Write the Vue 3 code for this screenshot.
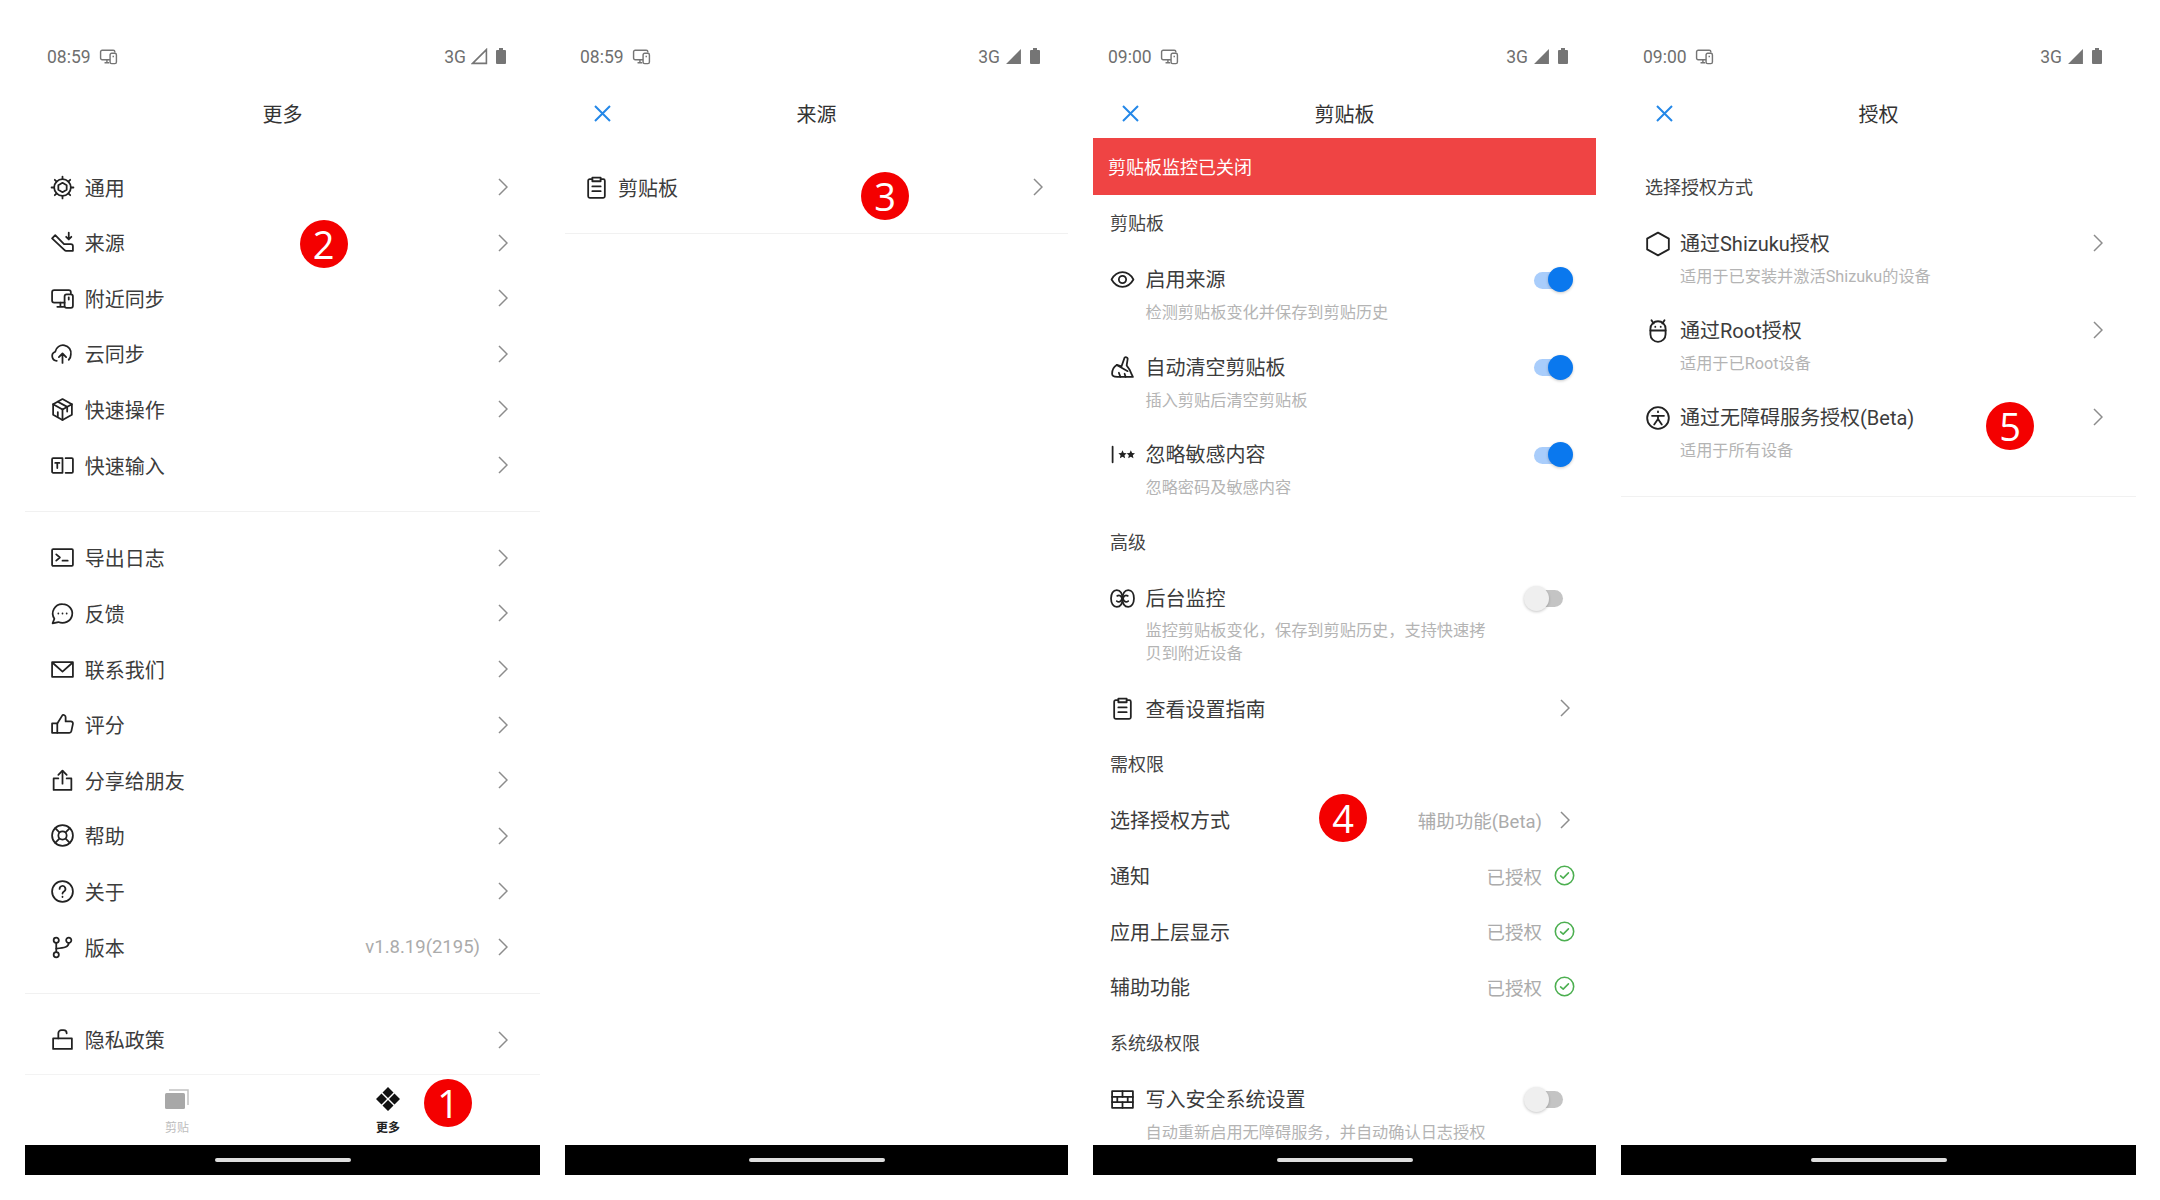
<script setup>
// circle helper so every icon can stay a plain list of path strings
const c = (x, y, r) => `M${x - r} ${y}a${r} ${r} 0 1 0 ${2 * r} 0a${r} ${r} 0 1 0 ${-2 * r} 0z`

const device = [
  'M14 16H4a2 2 0 0 1-2-2V6a2 2 0 0 1 2-2h14a2 2 0 0 1 2 2v1',
  'M7 20h6M10 16v4',
  'M16 8h4a2 2 0 0 1 2 2v9a2 2 0 0 1-2 2h-4a2 2 0 0 1-2-2v-9a2 2 0 0 1 2-2z',
  'M18 11v2',
]
const clipboard = [
  'M8 4H5.5A1.5 1.5 0 0 0 4 5.5v15A1.5 1.5 0 0 0 5.5 22h13a1.5 1.5 0 0 0 1.5-1.5v-15A1.5 1.5 0 0 0 18.5 4H16',
  'M8 2.5h8V6H8z',
  'M8 11h8M8 15.5h8',
]
const icons = {
  device,
  clipboard,
  gear: [c(12, 12, 8), 'M12 7.500l4 2.250v4.500l-4 2.250-4-2.250v-4.500z', 'M12 1.500V4M12 20v2.500M1.500 12H4M20 12h2.500M4.600 4.600l1.800 1.800M17.600 17.600l1.800 1.800M4.600 19.400l1.800-1.800M17.600 6.400l1.800-1.800'],
  source: ['M2 8l3-3 8.500 8.500H20a2 2 0 0 1 2 2V20h-6.500a2 2 0 0 1-1.500-.6z', 'M18 2.500V9M15.500 6.500L18 9l2.500-2.500'],
  cloud: ['M6.500 19A4.500 4.500 0 0 1 5 10.300 7.500 7.500 0 0 1 20 13c0 2.200-.8 3.800-2 5', 'M12 21v-9M8.500 15.500L12 12l3.500 3.500'],
  cube: ['M12 2l9 5v10l-9 5-9-5V7z', 'M3 7l9 5 9-5', 'M12 12v10', 'M7.500 4.500l9 5v4.500M7.500 14.500v4'],
  input: ['M3 5h9v14H3a1 1 0 0 1-1-1V6a1 1 0 0 1 1-1z', 'M15 5h6a1 1 0 0 1 1 1v12a1 1 0 0 1-1 1h-6', 'M5 9.500h4M7 9.500v5'],
  terminal: ['M3 4h18a1 1 0 0 1 1 1v14a1 1 0 0 1-1 1H3a1 1 0 0 1-1-1V5a1 1 0 0 1 1-1z', 'M6 9l3.500 3L6 15', 'M12 15h5'],
  chat: ['M12 3a9.500 9 0 1 1-4 17.200l-5.500 1.300 1.700-4.500A9 9 0 0 1 12 3z', 'M8 12h.01M12 12h.01M16 12h.01'],
  mail: ['M2 5h20v14H2z', 'M3 6l9 8 9-8'],
  thumb: ['M2 11h5v9H2z', 'M7 11l5-8c1.500-.5 3 .5 3 2v4h5a2 2 0 0 1 2 2.400l-1.500 7a2 2 0 0 1-2 1.600H7'],
  share: ['M8 10H3.500v11h17V10H16', 'M12 15V3', 'M8 6.500l4-4 4 4'],
  buoy: [c(12, 12, 10), c(12, 12, 4), 'M5 5l4 4M15 15l4 4M19 5l-4 4M5 19l4-4'],
  help: [c(12, 12, 10), 'M9.200 9.500a2.800 2.800 0 1 1 4.200 2.400c-.9.5-1.400 1.100-1.400 2.100', 'M12 17v.3'],
  branch: [c(6, 5, 2.5), c(6, 19, 2.5), c(18, 5, 2.5), 'M6 7.500v9', 'M18 7.500c0 4-4 5-12 5.500'],
  lock: ['M3 11h18v10H3z', 'M8 11V6a3 3 0 0 1 3-3h2a3 3 0 0 1 3 3'],
  eye: ['M1.500 12C4 7.500 8 5 12 5s8 2.500 10.500 7c-2.500 4.500-6.500 7-10.500 7s-8-2.500-10.500-7z', c(12, 12, 3.5)],
  broom: ['M14 2.500c1-.8 2.800-.3 3 1L16 10l3 4.500c.8 2 2 4.500 3 6.500H7c-2.500 0-5-1-5-3 0-4 2-7 4.500-8.500L11 11z', 'M6.500 9.500L17 15.500', 'M10 21l-1.500-4M15 21l-1-3'],
  cursor: ['M2.500 4.500v15'],
  lungs: ['M12 12c0-5-2-8-5.500-8S1 7.500 1 12s2.200 8 5.500 8 5.500-3 5.500-8z', 'M12 12c0-5 2-8 5.500-8S23 7.500 23 12s-2.200 8-5.500 8-5.500-3-5.500-8z', 'M7 9.500a3 3 0 1 1-.5 5', 'M17 9.500a3 3 0 1 0 .5 5'],
  bricks: ['M2 4h20v16H2z', 'M2 9.500h20M2 14.500h20', 'M12 4v5.500M7 9.500v5M17 9.500v5M12 14.500V20'],
  hexagon: ['M12 1.500l10 5.500v10l-10 5.500L2 17V7z'],
  robot: ['M5 10a7 7 0 0 1 14 0v5a7 7 0 0 1-14 0z', 'M5 11.500h14', 'M6 2l2 3M18 2l-2 3', 'M9.500 8v.2M14.500 8v.2'],
  access: [c(12, 12, 10), 'M12 6v.6', 'M6.500 10h11', 'M12 10v3l-3.500 5M12 13l3.500 5'],
  check: [c(12, 12, 10.5), 'M7.500 12.500l3 2.500 6-6'],
}

const generalRows = [
  { icon: 'gear', label: '通用' },
  { icon: 'source', label: '来源' },
  { icon: 'device', label: '附近同步' },
  { icon: 'cloud', label: '云同步' },
  { icon: 'cube', label: '快速操作' },
  { icon: 'input', label: '快速输入' },
]
const otherRows = [
  { icon: 'terminal', label: '导出日志' },
  { icon: 'chat', label: '反馈' },
  { icon: 'mail', label: '联系我们' },
  { icon: 'thumb', label: '评分' },
  { icon: 'share', label: '分享给朋友' },
  { icon: 'buoy', label: '帮助' },
  { icon: 'help', label: '关于' },
  { icon: 'branch', label: '版本', value: 'v1.8.19(2195)' },
]
const clipRows = [
  { icon: 'eye', title: '启用来源', sub: '检测剪贴板变化并保存到剪贴历史' },
  { icon: 'broom', title: '自动清空剪贴板', sub: '插入剪贴后清空剪贴板' },
  { icon: 'cursor', title: '忽略敏感内容', sub: '忽略密码及敏感内容' },
]
const grantedRows = ['通知', '应用上层显示', '辅助功能']
const authRows = [
  { icon: 'hexagon', title: '通过Shizuku授权', sub: '适用于已安装并激活Shizuku的设备' },
  { icon: 'robot', title: '通过Root授权', sub: '适用于已Root设备' },
  { icon: 'access', title: '通过无障碍服务授权(Beta)', sub: '适用于所有设备' },
]
const stars = ['M12 8l1.200 2.600 2.800.3-2.100 1.900.6 2.800L12 14.200l-2.500 1.400.6-2.800L8 10.900l2.800-.3z', 'M20 8l1.200 2.600 2.800.3-2.100 1.900.6 2.800L20 14.200l-2.500 1.400.6-2.800-2.100-1.900 2.800-.3z']
</script>

<template>
  <div class="page">
    <!-- 更多 -->
    <section class="phone wide">
      <div class="status">
        <span>08:59</span>
        <svg class="st-device" viewBox="0 0 24 24"><path v-for="d in icons.device" :key="d" :d="d" /></svg>
        <span class="st-gap"></span>
        <span>3G</span>
        <svg class="st-signal" viewBox="0 0 16 16"><path class="outline" d="M1.500 14.500L14.500 1.500v13z" /></svg>
        <span class="st-battery"></span>
      </div>
      <header class="header"><span></span><h1>更多</h1></header>

      <div class="body">
        <div class="group first">
          <div v-for="row in generalRows" :key="row.label" class="row">
            <svg class="ic" viewBox="0 0 24 24"><path v-for="d in icons[row.icon]" :key="d" :d="d" /></svg>
            <span class="label">{{ row.label }}</span>
            <svg class="chev" viewBox="0 0 10 18"><path d="M1 1l8 8-8 8" /></svg>
          </div>
        </div>
        <div class="group">
          <div v-for="row in otherRows" :key="row.label" class="row">
            <svg class="ic" viewBox="0 0 24 24"><path v-for="d in icons[row.icon]" :key="d" :d="d" /></svg>
            <span class="label">{{ row.label }}</span>
            <span v-if="row.value" class="value">{{ row.value }}</span>
            <svg class="chev" viewBox="0 0 10 18"><path d="M1 1l8 8-8 8" /></svg>
          </div>
        </div>
        <div class="group last">
          <div class="row">
            <svg class="ic" viewBox="0 0 24 24"><path v-for="d in icons.lock" :key="d" :d="d" /></svg>
            <span class="label">隐私政策</span>
            <svg class="chev" viewBox="0 0 10 18"><path d="M1 1l8 8-8 8" /></svg>
          </div>
        </div>
      </div>

      <nav class="tabs">
        <div class="tab">
          <svg class="tab-ic" viewBox="0 0 24 20">
            <path class="tab-back" d="M4 1h19v15" />
            <rect x="0" y="4" width="20" height="16" rx="1.500" fill="#a8a8a8" />
          </svg>
          <span>剪贴</span>
        </div>
        <div class="tab active">
          <svg class="tab-ic" viewBox="0 0 24 24">
            <path fill="#111" d="M12 0l5.500 5.500L12 11 6.500 5.500zM12 13l5.500 5.500L12 24l-5.500-5.500zM5.500 6.500L11 12l-5.500 5.500L0 12zM18.500 6.500L24 12l-5.500 5.500L13 12z" />
          </svg>
          <span>更多</span>
        </div>
      </nav>
      <div class="navbar"><i></i></div>
      <span class="badge b1">1</span>
      <span class="badge b2">2</span>
    </section>

    <!-- 来源 -->
    <section class="phone narrow">
      <div class="status">
        <span>08:59</span>
        <svg class="st-device" viewBox="0 0 24 24"><path v-for="d in icons.device" :key="d" :d="d" /></svg>
        <span class="st-gap"></span>
        <span>3G</span>
        <svg class="st-signal" viewBox="0 0 16 16"><path class="solid" d="M1 15L15 1v14z" /></svg>
        <span class="st-battery"></span>
      </div>
      <header class="header">
        <svg class="close" viewBox="0 0 17 17"><path d="M1 1l15 15M16 1L1 16" /></svg>
        <h1>来源</h1>
      </header>
      <div class="body">
        <div class="group first src">
          <div class="row">
            <svg class="ic" viewBox="0 0 24 24"><path v-for="d in icons.clipboard" :key="d" :d="d" /></svg>
            <span class="label">剪贴板</span>
            <svg class="chev" viewBox="0 0 10 18"><path d="M1 1l8 8-8 8" /></svg>
          </div>
        </div>
      </div>
      <div class="navbar"><i></i></div>
      <span class="badge b3">3</span>
    </section>

    <!-- 剪贴板 -->
    <section class="phone narrow">
      <div class="status">
        <span>09:00</span>
        <svg class="st-device" viewBox="0 0 24 24"><path v-for="d in icons.device" :key="d" :d="d" /></svg>
        <span class="st-gap"></span>
        <span>3G</span>
        <svg class="st-signal" viewBox="0 0 16 16"><path class="solid" d="M1 15L15 1v14z" /></svg>
        <span class="st-battery"></span>
      </div>
      <header class="header">
        <svg class="close" viewBox="0 0 17 17"><path d="M1 1l15 15M16 1L1 16" /></svg>
        <h1>剪贴板</h1>
      </header>
      <div class="body">
        <div class="alert">剪贴板监控已关闭</div>
        <div class="heading">剪贴板</div>
        <div v-for="row in clipRows" :key="row.title" class="item">
          <svg class="ic" viewBox="0 0 24 24">
            <path v-for="d in icons[row.icon]" :key="d" :d="d" />
            <template v-if="row.icon === 'cursor'">
              <path v-for="d in stars" :key="d" class="star" :d="d" />
            </template>
          </svg>
          <div class="item-body">
            <div class="item-title">{{ row.title }}</div>
            <div class="item-sub">{{ row.sub }}</div>
          </div>
          <span class="toggle on"><i></i></span>
        </div>

        <div class="heading adv">高级</div>
        <div class="item bg">
          <svg class="ic" viewBox="0 0 24 24"><path v-for="d in icons.lungs" :key="d" :d="d" /></svg>
          <div class="item-body">
            <div class="item-title">后台监控</div>
            <div class="item-sub">监控剪贴板变化，保存到剪贴历史，支持快速拷贝到附近设备</div>
          </div>
          <span class="toggle"><i></i></span>
        </div>
        <div class="row guide">
          <svg class="ic" viewBox="0 0 24 24"><path v-for="d in icons.clipboard" :key="d" :d="d" /></svg>
          <span class="label">查看设置指南</span>
          <svg class="chev" viewBox="0 0 10 18"><path d="M1 1l8 8-8 8" /></svg>
        </div>

        <div class="heading">需权限</div>
        <div class="perms">
          <div class="perm">
            <span class="label">选择授权方式</span>
            <span class="value">辅助功能(Beta)</span>
            <svg class="chev" viewBox="0 0 10 18"><path d="M1 1l8 8-8 8" /></svg>
          </div>
          <div v-for="name in grantedRows" :key="name" class="perm">
            <span class="label">{{ name }}</span>
            <span class="value">已授权</span>
            <svg class="ok" viewBox="0 0 24 24"><path v-for="d in icons.check" :key="d" :d="d" /></svg>
          </div>
        </div>

        <div class="heading">系统级权限</div>
        <div class="item">
          <svg class="ic" viewBox="0 0 24 24"><path v-for="d in icons.bricks" :key="d" :d="d" /></svg>
          <div class="item-body">
            <div class="item-title">写入安全系统设置</div>
            <div class="item-sub">自动重新启用无障碍服务，并自动确认日志授权</div>
          </div>
          <span class="toggle"><i></i></span>
        </div>
      </div>
      <div class="navbar"><i></i></div>
      <span class="badge b4">4</span>
    </section>

    <!-- 授权 -->
    <section class="phone wide">
      <div class="status">
        <span>09:00</span>
        <svg class="st-device" viewBox="0 0 24 24"><path v-for="d in icons.device" :key="d" :d="d" /></svg>
        <span class="st-gap"></span>
        <span>3G</span>
        <svg class="st-signal" viewBox="0 0 16 16"><path class="solid" d="M1 15L15 1v14z" /></svg>
        <span class="st-battery"></span>
      </div>
      <header class="header">
        <svg class="close" viewBox="0 0 17 17"><path d="M1 1l15 15M16 1L1 16" /></svg>
        <h1>授权</h1>
      </header>
      <div class="body">
        <div class="auth">
          <div class="heading">选择授权方式</div>
          <div v-for="row in authRows" :key="row.title" class="auth-item">
            <svg class="ic" viewBox="0 0 24 24"><path v-for="d in icons[row.icon]" :key="d" :d="d" /></svg>
            <div class="item-body">
              <div class="item-title">{{ row.title }}</div>
              <div class="item-sub">{{ row.sub }}</div>
            </div>
            <svg class="chev" viewBox="0 0 10 18"><path d="M1 1l8 8-8 8" /></svg>
          </div>
        </div>
      </div>
      <div class="navbar"><i></i></div>
      <span class="badge b5">5</span>
    </section>
  </div>
</template>

<style scoped>
.page {
  display: flex;
  gap: 25px;
  padding: 29px 0 0 25px;
  height: 1200px;
  box-sizing: border-box;
  background: #fff;
  font-family: Roboto, "Noto Sans CJK SC", sans-serif;
  color: #3c3c3c;
}

.phone {
  position: relative;
  display: flex;
  flex-direction: column;
  height: 1146px;
  flex-shrink: 0;
}
.wide { width: 515px; }
.narrow { width: 503px; }

.status {
  display: flex;
  align-items: center;
  height: 55px;
  font-size: 17.500px;
  color: #6f6f6f;
}
.wide .status { padding: 0 34px 0 22px; }
.narrow .status { padding: 0 28px 0 15px; }
.st-gap { flex: 1; }
.st-device {
  width: 19px;
  height: 19px;
  margin-left: 8px;
  fill: none;
  stroke: #757575;
  stroke-width: 1.800;
}
.st-signal {
  width: 17px;
  height: 17px;
  margin-left: 5px;
}
.st-signal .outline { fill: none; stroke: #757575; stroke-width: 1.500; }
.st-signal .solid { fill: #757575; }
.st-battery {
  position: relative;
  width: 10px;
  height: 14px;
  margin: 1px 0 0 8px;
  background: #757575;
  border-radius: 1px;
}
.st-battery::before {
  content: "";
  position: absolute;
  top: -2px;
  left: 3px;
  width: 4px;
  height: 2px;
  background: #757575;
}

.header {
  position: relative;
  display: flex;
  align-items: center;
  justify-content: center;
  height: 54px;
  padding-top: 5px;
  box-sizing: border-box;
}
.header h1 {
  margin: 0;
  font-size: 20px;
  font-weight: 400;
  color: #333;
}
.close {
  position: absolute;
  top: 21px;
  width: 17px;
  height: 17px;
  fill: none;
  stroke: #2488e8;
  stroke-width: 2;
}
.narrow .close { left: 29px; }
.wide .close { left: 35px; }

.body {
  flex: 1;
  min-height: 0;
  overflow: hidden;
}

.group {
  padding: 17.700px 0 18.500px;
  border-bottom: 1px solid #f1f1f1;
}
.group.first { padding-top: 21.300px; }
.group.last { padding-bottom: 0; border-bottom: 0; }

.row {
  display: flex;
  align-items: center;
  height: 55.600px;
  padding: 0 32px 0 24.500px;
}
.src .row { padding: 0 25px 0 18.500px; }
.src { padding-bottom: 17.700px; }
.src .label { margin-left: 9.500px; }

.ic {
  flex-shrink: 0;
  width: 25px;
  height: 25px;
  fill: none;
  stroke: #222;
  stroke-width: 1.700;
  stroke-linecap: round;
  stroke-linejoin: round;
}
.ic .star { fill: #222; stroke: none; }

.label {
  flex: 1;
  margin-left: 10.200px;
  font-size: 20px;
}
.value {
  margin-right: 18px;
  font-size: 18.500px;
  color: #ababab;
}
.chev {
  flex-shrink: 0;
  width: 10px;
  height: 18px;
  fill: none;
  stroke: #8c8c8c;
  stroke-width: 1.500;
}

.tabs {
  display: flex;
  height: 71px;
  padding: 0 46.500px;
  border-top: 1px solid #f3f3f3;
  box-sizing: border-box;
}
.tab {
  display: flex;
  flex-direction: column;
  align-items: center;
  width: 211px;
  font-size: 12px;
  color: #bdbdbd;
  line-height: 16px;
}
.tab.active { color: #222; font-weight: 700; }
.tab-ic {
  width: 24px;
  height: 24px;
  margin: 12px 0 9px;
}
.tab-back { fill: none; stroke: #c2c2c2; stroke-width: 1.500; }

.navbar {
  display: flex;
  align-items: center;
  justify-content: center;
  flex-shrink: 0;
  height: 30.500px;
  background: #000;
}
.navbar i {
  width: 136px;
  height: 4px;
  border-radius: 2px;
  background: #ddd;
}

.alert {
  height: 57px;
  line-height: 60px;
  padding-left: 15px;
  background: #ef4444;
  color: #fff;
  font-size: 18px;
}

.heading {
  height: 57px;
  line-height: 57px;
  padding-left: 17px;
  font-size: 18px;
  color: #444;
}
.heading.adv { margin-top: -0.700px; }

.item {
  display: flex;
  align-items: flex-start;
  padding: 15px 23px 14px 17px;
  margin-bottom: 1.700px;
}
.item.bg { margin-top: -0.700px; margin-bottom: 1.400px; }
.item-body {
  flex: 1;
  margin-left: 10.500px;
}
.item-title {
  height: 26px;
  line-height: 26px;
  font-size: 20px;
}
.item-sub {
  max-width: 345px;
  margin-top: 8px;
  font-size: 16.200px;
  line-height: 23px;
  color: #b4b4b4;
}
.bg .item-sub { margin-top: 7.500px; }

.toggle {
  position: relative;
  flex-shrink: 0;
  width: 39px;
  height: 26px;
  margin-right: 10px;
}
.toggle::before {
  content: "";
  position: absolute;
  top: 4.500px;
  left: 5px;
  width: 34px;
  height: 17px;
  border-radius: 9px;
  background: #c4c4c4;
}
.toggle i {
  position: absolute;
  top: 0;
  left: 0;
  width: 25px;
  height: 25px;
  border-radius: 50%;
  background: #efefef;
  box-shadow: 0 1px 3px rgba(0, 0, 0, 0.22);
}
.toggle.on { margin-right: 0; }
.toggle.on::before { left: 0; background: #a9cdfb; }
.toggle.on i { left: 14px; background: #0a78ee; }

.guide { padding: 0 26px 0 17px; }
.guide .label { margin-left: 10.500px; }

.perms { margin-top: -1px; }
.perm {
  display: flex;
  align-items: center;
  height: 55.600px;
  padding: 0 21px 0 17px;
}
.perm .label { margin-left: 0; }
.perm .chev { margin: 0 5px 0 6px; }
.perm .value { margin-right: 12px; }
.ok {
  flex-shrink: 0;
  width: 21px;
  height: 21px;
  fill: none;
  stroke: #4caf50;
  stroke-width: 1.800;
  stroke-linecap: round;
  stroke-linejoin: round;
}

.auth {
  padding: 21px 0 19px;
  border-bottom: 1px solid #f1f1f1;
}
.auth .heading { padding-left: 24px; }
.auth-item {
  display: flex;
  align-items: flex-start;
  padding: 15px 33px 14px 24px;
  margin-bottom: 1.500px;
}
.auth-item .ic { width: 26px; height: 26px; }
.auth-item .item-body { margin-left: 9px; }
.auth-item .item-sub { margin-top: 7.500px; }
.auth-item .chev { margin-top: 3px; }

.badge {
  position: absolute;
  width: 48px;
  height: 48px;
  border-radius: 50%;
  background: #f40000;
  color: #fff;
  font-family: "Open Sans", sans-serif;
  font-size: 38px;
  line-height: 48px;
  text-align: center;
}
.b1 { left: 399px; top: 1050px; }
.b2 { left: 274.500px; top: 191px; }
.b3 { left: 296px; top: 143px; }
.b4 { left: 226px; top: 765px; }
.b5 { left: 365px; top: 373px; }
</style>

<style>
html, body { margin: 0; background: #fff; }
</style>
